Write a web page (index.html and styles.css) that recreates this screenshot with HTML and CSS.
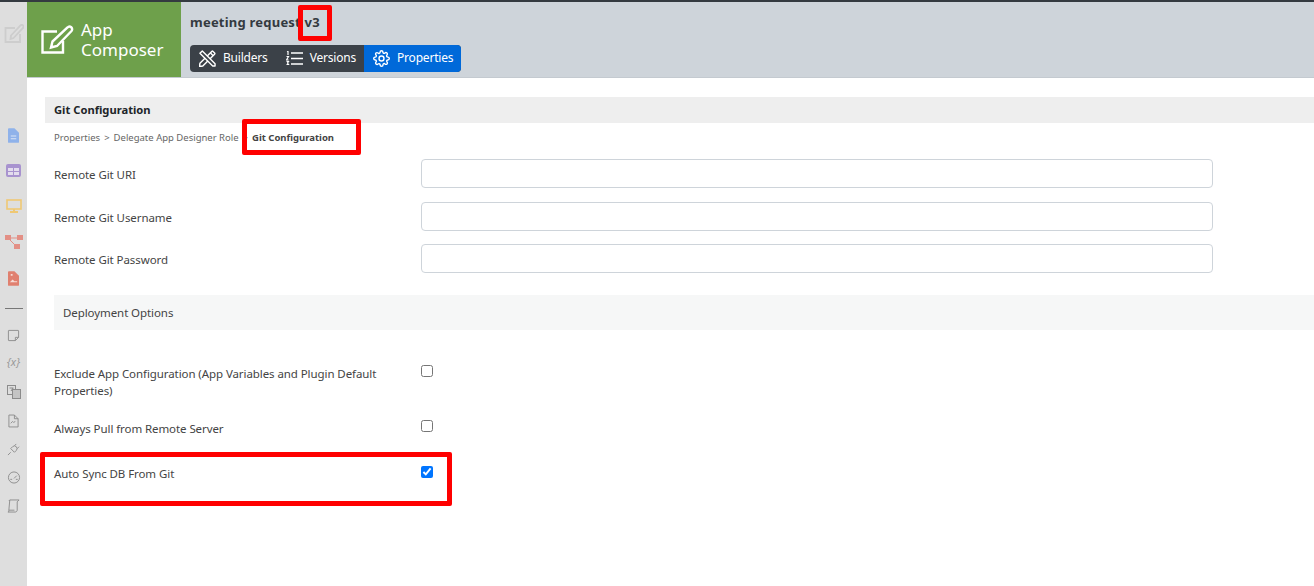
FILE: index.html
```html
<!DOCTYPE html>
<html lang="en">
<head>
<meta charset="utf-8">
<title>App Composer</title>
<link rel="stylesheet" href="styles.css">
</head>
<body>
<div class="app">
  <aside class="rail">
    <svg class="rail-top" viewBox="0 0 20 19" width="20" height="19" fill="none" stroke="#cdcdcd" stroke-width="1.800"><path d="M16 10v8H1.500V4H11"/><path d="M7 11.500 16.500 1.500a1.500 1.500 0 0 1 2.500 2.500L9.500 14 6.500 15z"/></svg>
    <div class="rail-group">
      <svg viewBox="0 0 12 16" width="11" height="15"><path fill="#8fb2ea" d="M0 1a1 1 0 0 1 1-1h6l5 5v10a1 1 0 0 1-1 1H1a1 1 0 0 1-1-1z"/><path fill="#dbe5f5" d="M3 8h6v1H3zM3 11h6v1H3z"/></svg>
      <svg viewBox="0 0 15 13" width="15" height="13"><rect width="15" height="13" rx="2" fill="#a893cf"/><path fill="#e3dded" d="M2 4h5v3H2zM8 4h5v3H8zM2 8h5v3H2zM8 8h5v3H8z"/></svg>
      <svg class="rail-wide" viewBox="0 0 16 14" width="16" height="14"><rect x="1" y="1" width="14" height="9" fill="none" stroke="#efc874" stroke-width="1.600"/><path fill="#efc874" d="M7 10h2v2H7zM4 12h8v2H4z"/></svg>
      <svg viewBox="0 0 18 15" width="18" height="15"><path fill="none" stroke="#e38f85" d="M5 3h9M4 4l8 8"/><rect x="0" y="0" width="6" height="5" fill="#e38f85"/><rect x="12" y="0" width="6" height="5" fill="#e38f85"/><rect x="9" y="9" width="6" height="5" fill="#e38f85"/></svg>
      <svg viewBox="0 0 12 16" width="11" height="15"><path fill="#e0806f" d="M0 1a1 1 0 0 1 1-1h6l5 5v10a1 1 0 0 1-1 1H1a1 1 0 0 1-1-1z"/><path fill="#f6dcd6" d="M3 3h2v2H3zM2 12l3-3 2 2h3v1z"/></svg>
    </div>
    <div class="rail-sep"></div>
    <div class="rail-group rail-group-plain">
      <svg viewBox="0 0 14 14" width="13" height="13" fill="none" stroke="#8b8b8b"><path d="M2 1.500h10a.5.500 0 0 1 .5.500v7L9 12.500H2a.5.500 0 0 1-.5-.5V2a.5.500 0 0 1 .5-.5zM9 12.500V9h3.500"/></svg>
      <span class="rail-var">{x}</span>
      <svg viewBox="0 0 14 14" width="14" height="14" fill="none" stroke="#8b8b8b"><rect x=".5" y=".5" width="8" height="9" fill="#dedede"/><rect x="5.500" y="4.500" width="8" height="9" fill="#c4c4c4"/><path d="M2.500 3h4M4 6l2-3"/></svg>
      <svg viewBox="0 0 12 15" width="11" height="14" fill="none" stroke="#8b8b8b"><path d="M1 1h6l4 4v9H1zM7 1v4h4M3 10l2-2 1 1 2-1"/></svg>
      <svg viewBox="0 0 14 14" width="13" height="13" fill="none" stroke="#8b8b8b"><path d="M1 13l3-3M4 6l4 4 2-2a2.800 2.800 0 0 0-4-4zM8 3l2-2M11 6l2-2"/></svg>
      <svg viewBox="0 0 14 14" width="14" height="13" fill="none" stroke="#8b8b8b"><circle cx="7" cy="7" r="6"/><path d="M7 8l3-3M3 9h2M9 9h2"/></svg>
      <svg viewBox="0 0 14 15" width="13" height="14" fill="none" stroke="#8b8b8b"><path d="M3 1h10l-2 2v9c0 1-1 2-2 2H1c1 0 1-1 1-2zM3 1l-1 1M2 12h6"/></svg>
    </div>
  </aside>
  <div class="main">
    <header class="header">
      <div class="brand">
        <svg class="brand-icon" viewBox="0 0 34 30" width="34" height="30" fill="none" stroke="#fff" stroke-width="2.400"><path d="M23 16v11.500H2.500V6.500H17"/><path d="M12.500 16.500 27.500 2.500a2.200 2.200 0 0 1 4 3.500L17 21l-6 1.500z"/></svg>
        <span class="brand-name">App<br>Composer</span>
      </div>
      <div class="head-body">
        <div class="app-title">meeting request v3</div>
        <nav class="tabs">
          <a class="tab tab-builders">
            <svg viewBox="0 0 18 18" width="17" height="17" fill="none" stroke="#fff" stroke-width="1.500" stroke-linejoin="round"><path d="M1 14 13.500 1.500a1 1 0 0 1 1.400 0l1.600 1.600a1 1 0 0 1 0 1.400L4 17l-3.500.5z"/><path d="M3.500 1 17 14.500V17h-2.500L1 3.500z" fill="#3b4148"/><path d="M12 3l3 3"/></svg>
            <span class="tab-text">Builders</span>
          </a>
          <a class="tab tab-versions">
            <svg viewBox="0 0 17 15" width="17" height="15" fill="none" stroke="#fff"><path stroke-width="1.600" d="M5 2h12M5 7.500h12M5 13h12"/><path stroke-width="1.200" d="M1 .5 2 0v4M.5 5.500h2L.5 9h2.200M.5 10.500h2l-1 1.500 1 1.500H.5"/></svg>
            <span class="tab-text">Versions</span>
          </a>
          <a class="tab tab-active">
            <svg viewBox="0 0 24 24" width="17" height="17" fill="none" stroke="#fff" stroke-width="2"><circle cx="12" cy="12" r="3.500"/><path d="M19.400 15a1.650 1.650 0 0 0 .33 1.820l.06.06a2 2 0 0 1 0 2.830 2 2 0 0 1-2.830 0l-.06-.06a1.650 1.650 0 0 0-1.820-.33 1.650 1.650 0 0 0-1 1.510V21a2 2 0 0 1-2 2 2 2 0 0 1-2-2v-.09A1.650 1.650 0 0 0 9 19.400a1.650 1.650 0 0 0-1.820.33l-.06.06a2 2 0 0 1-2.830 0 2 2 0 0 1 0-2.830l.06-.06a1.650 1.650 0 0 0 .33-1.820 1.650 1.650 0 0 0-1.510-1H3a2 2 0 0 1-2-2 2 2 0 0 1 2-2h.09A1.650 1.650 0 0 0 4.600 9a1.650 1.650 0 0 0-.33-1.820l-.06-.06a2 2 0 0 1 0-2.830 2 2 0 0 1 2.830 0l.06.06a1.650 1.650 0 0 0 1.820.33H9a1.650 1.650 0 0 0 1-1.510V3a2 2 0 0 1 2-2 2 2 0 0 1 2 2v.09a1.650 1.650 0 0 0 1 1.510 1.650 1.650 0 0 0 1.820-.33l.06-.06a2 2 0 0 1 2.830 0 2 2 0 0 1 0 2.830l-.06.06a1.650 1.650 0 0 0-.33 1.820V9a1.650 1.650 0 0 0 1.510 1H21a2 2 0 0 1 2 2 2 2 0 0 1-2 2h-.09a1.650 1.650 0 0 0-1.510 1z"/></svg>
            <span class="tab-text">Properties</span>
          </a>
        </nav>
      </div>
    </header>
    <section class="content">
      <h1 class="page-title">Git Configuration</h1>
      <div class="inner">
        <p class="crumbs">Properties<span class="crumb-sep">&gt;</span>Delegate App Designer Role<span class="crumb-sep">&gt;</span><b>Git Configuration</b></p>
        <div class="row"><label class="lbl">Remote Git URI</label><input class="field" type="text"></div>
        <div class="row"><label class="lbl">Remote Git Username</label><input class="field" type="text"></div>
        <div class="row"><label class="lbl">Remote Git Password</label><input class="field" type="password"></div>
        <h2 class="sub">Deployment Options</h2>
        <div class="check-row check-tall"><label class="lbl">Exclude App Configuration (App Variables and Plugin Default Properties)</label><input class="check" type="checkbox"></div>
        <div class="check-row check-mid"><label class="lbl">Always Pull from Remote Server</label><input class="check" type="checkbox"></div>
        <div class="check-row check-last"><label class="lbl">Auto Sync DB From Git</label><input class="check" type="checkbox" checked></div>
      </div>
    </section>
  </div>
  <div class="mark mark-version"></div>
  <div class="mark mark-crumb"></div>
  <div class="mark mark-sync"></div>
</div>
</body>
</html>
```
FILE: styles.css
```css
* { box-sizing: border-box; }
html, body { margin: 0; height: 100%; }
body { background: #fff; font-family: "Noto Sans", "Open Sans", sans-serif; font-size: 12px; color: #343a40; overflow: hidden; }
.app { position: relative; display: flex; height: 586px; border-top: 2px solid #343a40; }
.rail { width: 27px; flex: none; background: #dedede; display: flex; flex-direction: column; align-items: center; }
.rail-top { margin-top: 22px; }
.rail-group { display: flex; flex-direction: column; align-items: center; gap: 21px; margin-top: 85px; }
.rail-wide { margin: 1px 0; }
.rail-group-plain { margin-top: 20px; gap: 15px; }
.rail-sep { width: 18px; height: 1px; background: #777; margin-top: 22px; }
.rail-var { font: italic 11px/13px "Noto Sans", sans-serif; color: #999; margin: -2px 0 2px; }
.main { flex: 1; min-width: 0; display: flex; flex-direction: column; }
.header { height: 76px; display: flex; background: #ced4da; border-bottom: 1px solid #c4cad0; flex: none; }
.brand { width: 154px; background: #6ea04b; display: flex; align-items: center; gap: 7px; padding-left: 13px; color: #fff; }
.brand-icon { margin-top: 1px; }
.brand-name { font-size: 17px; line-height: 20px; }
.head-body { padding: 11px 0 0 9px; }
.app-title { font-size: 13px; font-weight: 700; line-height: 18px; letter-spacing: .22px; color: #343a40; }
.tabs { display: flex; margin-top: 14px; height: 27px; background: #3b4148; border-radius: 4px; width: 271px; }
.tab { display: flex; align-items: center; gap: 7px; color: #fff; font-size: 12px; letter-spacing: -.2px; }
.tab-text { margin-top: -2px; }
.tab-builders { padding-left: 9px; }
.tab-versions { padding-left: 18px; }
.tab-active { padding-left: 9px; background: #0069d9; border-radius: 0 4px 4px 0; margin-left: auto; width: 97px; }
.content { flex: 1; padding: 19px 0 0 18px; }
.page-title { margin: 0; height: 26px; line-height: 26px; padding-left: 9px; background: #eee; font-size: 11.200px; font-weight: 700; color: #212529; }
.inner { padding-left: 9px; }
.crumbs { margin: 0; height: 29px; line-height: 29px; font-size: 9.500px; color: #666; white-space: nowrap; }
.crumb-sep { margin: 0 4px; }
.crumbs b { color: #444; }
.row { display: flex; align-items: center; height: 29px; margin: 7px 0 13.500px; }
.row .lbl { padding-top: 2px; }
.lbl { width: 367px; flex: none; font-size: 11.500px; letter-spacing: -.08px; line-height: 17px; color: #444; }
.field { width: 792px; height: 29px; border: 1px solid #ced4da; border-radius: 4px; background: #fff; }
.sub { margin: 22px 0 0; height: 35px; line-height: 35px; padding-left: 9px; background: #f6f7f7; font-size: 11.500px; letter-spacing: -.08px; font-weight: 400; color: #444; }
.check-row { display: flex; align-items: flex-start; }
.check-tall { margin-top: 35px; height: 52px; }
.check-mid { height: 48px; padding-top: 3px; }
.check-row .lbl { padding-right: 20px; }
.check { width: 12px; height: 12px; margin: 0; }
.check-mid .check { margin-top: 0; }
.check-last .check { margin-top: 1px; }
.mark { position: absolute; border: 5px solid #f00; border-radius: 2px; }
.mark-version { left: 298px; top: 3px; width: 34px; height: 36px; }
.mark-crumb { left: 242px; top: 117px; width: 119px; height: 36px; }
.mark-sync { left: 40px; top: 450px; width: 412px; height: 54px; }
```
